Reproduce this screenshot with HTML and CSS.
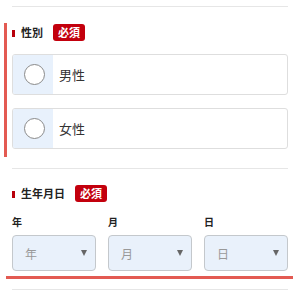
FILE: index.html
```html
<!DOCTYPE html>
<html lang="ja">
<head>
<meta charset="utf-8">
<link rel="stylesheet" href="styles.css">
</head>
<body>
<div class="page">
  <div class="divider first"></div>

  <div class="field field-error">
    <div class="label-row">
      <span class="label-bar"></span>
      <span class="label-text">性別</span>
      <span class="badge">必須</span>
    </div>
    <div class="options">
      <label class="option">
        <span class="option-radio"><span class="circle"></span></span>
        <span class="option-text">男性</span>
      </label>
      <label class="option">
        <span class="option-radio"><span class="circle"></span></span>
        <span class="option-text">女性</span>
      </label>
    </div>
  </div>

  <div class="divider mid"></div>

  <div class="field date-field">
    <div class="label-row">
      <span class="label-bar"></span>
      <span class="label-text">生年月日</span>
      <span class="badge">必須</span>
    </div>
    <div class="date-grid">
      <div class="date-col">
        <div class="sub-label">年</div>
        <div class="select"><span class="placeholder">年</span><span class="arrow"></span></div>
      </div>
      <div class="date-col">
        <div class="sub-label">月</div>
        <div class="select"><span class="placeholder">月</span><span class="arrow"></span></div>
      </div>
      <div class="date-col">
        <div class="sub-label">日</div>
        <div class="select"><span class="placeholder">日</span><span class="arrow"></span></div>
      </div>
    </div>
  </div>
  <div class="error-line"></div>

  <div class="divider last"></div>
</div>
</body>
</html>
```

FILE: styles.css
```css
html, body {
  margin: 0;
  padding: 0;
  background: #fff;
}
body {
  font-family: "Noto Sans CJK JP", "Noto Sans", sans-serif;
  color: #333;
  width: 300px;
  height: 296px;
  overflow: hidden;
}
.page {
  padding-top: 6px;
}
.divider {
  height: 1px;
  background: #e6e6e6;
  margin: 0 12px;
}
.field-error {
  margin-top: 16px;
  margin-left: 4px;
  border-left: 3px solid #e35a52;
  padding: 1px 12px 8px 5px;
}
.label-row {
  display: flex;
  align-items: center;
  height: 17px;
}
.label-bar {
  width: 3px;
  height: 7px;
  background: #b8000b;
  margin-top: 2px;
}
.label-text {
  margin-left: 6px;
  font-size: 11px;
  font-weight: 700;
  color: #222;
  line-height: 17px;
}
.badge {
  margin-left: 10px;
  background: #c3000d;
  color: #fff;
  font-size: 11px;
  font-weight: 700;
  line-height: 17px;
  height: 17px;
  padding: 0 5px;
  border-radius: 3px;
}
.options {
  margin-top: 13px;
  display: flex;
  flex-direction: column;
  gap: 13px;
}
.option {
  display: flex;
  align-items: stretch;
  height: 41px;
  border: 1px solid #dedede;
  border-radius: 3px;
  box-sizing: border-box;
  overflow: hidden;
}
.option-radio {
  width: 40px;
  background: #e8f1fc;
  display: flex;
  align-items: center;
  justify-content: center;
}
.circle {
  width: 21px;
  height: 21px;
  border: 1.5px solid #8a8a8a;
  border-radius: 50%;
  background: #fff;
  box-sizing: border-box;
  margin-left: 3px;
}
.option-text {
  display: flex;
  align-items: center;
  padding-left: 6px;
  font-size: 13px;
  color: #333;
}
.divider.mid {
  margin-top: 11px;
}
.date-field {
  padding: 16px 12px 0 12px;
}
.date-grid {
  display: grid;
  grid-template-columns: repeat(3, 1fr);
  column-gap: 12px;
  margin-top: 13px;
}
.sub-label {
  font-size: 10px;
  font-weight: 700;
  color: #222;
  line-height: 14px;
  height: 14px;
}
.select {
  margin-top: 6px;
  height: 36px;
  box-sizing: border-box;
  border: 1px solid #c4c8cc;
  border-radius: 4px;
  background: #e9f1fb;
  display: flex;
  align-items: center;
  justify-content: space-between;
  padding: 0 8px 0 12px;
}
.placeholder {
  font-size: 12px;
  color: #999;
}
.arrow {
  width: 0;
  height: 0;
  border-left: 3.5px solid transparent;
  border-right: 3.5px solid transparent;
  border-top: 6px solid #666;
}
.error-line {
  margin-top: 5px;
  margin-left: 6px;
  width: 287px;
  height: 3px;
  background: #e35a52;
}
.divider.last {
  margin-top: 10px;
}
```
